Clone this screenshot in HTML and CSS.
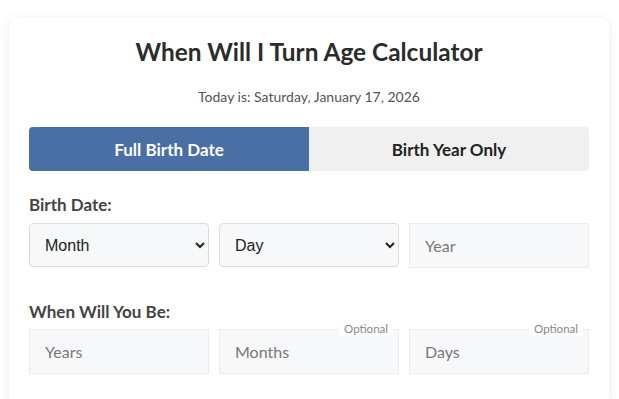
FILE: index.html
```html
<!DOCTYPE html>
<html lang="en">
<head>
<meta charset="utf-8">
<title>When Will I Turn Age Calculator</title>
<link rel="stylesheet" href="styles.css">
</head>
<body>
<div class="page">
  <div class="card">
    <h1 class="title">When Will I Turn Age Calculator</h1>
    <p class="today">Today is: Saturday, January 17, 2026</p>
    <div class="tabs">
      <button class="tab tab-active">Full Birth Date</button>
      <button class="tab">Birth Year Only</button>
    </div>
    <div class="group">
      <label class="label">Birth Date:</label>
      <div class="row">
        <select class="select"><option>Month</option></select>
        <select class="select"><option>Day</option></select>
        <input class="input" type="text" placeholder="Year">
      </div>
    </div>
    <div class="group group-age">
      <label class="label">When Will You Be:</label>
      <div class="row">
        <div class="field"><input class="input" type="text" placeholder="Years"></div>
        <div class="field"><input class="input" type="text" placeholder="Months"><span class="optional">Optional</span></div>
        <div class="field"><input class="input" type="text" placeholder="Days"><span class="optional">Optional</span></div>
      </div>
    </div>
  </div>
</div>
</body>
</html>
```
FILE: styles.css
```css
* { box-sizing: border-box; }
html, body { margin: 0; padding: 0; background: #ffffff; }
body { font-family: Lato, "Open Sans", sans-serif; color: #333; }
.page { padding: 17px 0 0 9px; }
.card {
  width: 600px;
  background: #fff;
  border-radius: 10px;
  box-shadow: 0 2px 12px rgba(0,0,0,0.08);
  padding: 20px 20px 40px;
}
.title {
  margin: 0;
  font-size: 24.4px;
  line-height: 29px;
  font-weight: 700;
  text-align: center;
  color: #2c2c2c;
}
.today {
  margin: 20px 0 20px;
  font-size: 14px;
  line-height: 21px;
  text-align: center;
  color: #555;
}
.tabs {
  display: flex;
  border-radius: 4px;
  overflow: hidden;
  background: #f0f0f0;
}
.tab {
  flex: 1;
  height: 44px;
  border: 0;
  margin: 0;
  font-family: inherit;
  font-size: 17px;
  font-weight: 700;
  background: #f0f0f0;
  color: #222;
}
.tab-active { background: #4a6fa5; color: #fff; }
.group { margin-top: 22px; }
.group-age { margin-top: 32px; }
.label {
  display: block;
  font-size: 17px;
  line-height: 24px;
  font-weight: 700;
  color: #444;
  margin-bottom: 6px;
}
.group-age .label { margin-bottom: 5px; }
.row {
  display: grid;
  grid-template-columns: repeat(3, 1fr);
  gap: 10px;
}
.select {
  height: 44px;
  width: 100%;
  padding: 0 10px 0 11px;
  border: 1px solid #dcdcdc;
  border-radius: 4px;
  background-color: #f7f8fa;
  font-family: "Liberation Sans", Arial, sans-serif;
  font-size: 16px;
  color: #222;
}
.input {
  height: 45px;
  width: 100%;
  padding: 0 15px;
  border: 1px solid #ececec;
  border-radius: 0;
  background: #f7f8fa;
  font-family: inherit;
  font-size: 16px;
  color: #333;
  outline: none;
}
.input::placeholder { color: #777; }
.field { position: relative; }
.optional {
  position: absolute;
  top: -7px;
  right: 6px;
  padding: 0 5px;
  background: #fff;
  font-size: 11.5px;
  line-height: 14px;
  color: #888;
}
```
